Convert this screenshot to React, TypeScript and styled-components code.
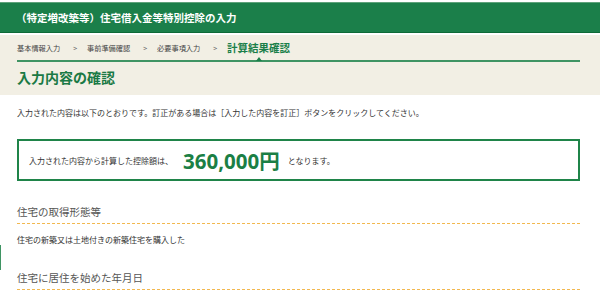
import React from "react";
import styled, { createGlobalStyle } from "styled-components";

const GlobalStyle = createGlobalStyle`
  html, body {
    margin: 0;
    padding: 0;
    background: #ffffff;
  }
  body {
    font-family: "Noto Sans CJK JP", "Noto Sans", sans-serif;
    color: #333333;
    width: 600px;
    overflow: hidden;
  }
`;

const Page = styled.div`
  position: relative;
  padding-top: 2px;
  width: 600px;
  height: 301px;
  overflow: hidden;
`;

const Header = styled.header`
  height: 29px;
  background: #1b7f4a;
  border-top: 1px solid #5ea37b;
  border-bottom: 1px solid #0e6a37;
  display: flex;
  align-items: center;
  padding-left: 16px;
  margin-bottom: 2px;
`;

const HeaderTitle = styled.h1`
  margin: 0;
  font-size: 10.5px;
  font-weight: 700;
  color: #ffffff;
  letter-spacing: 0;
`;

const Band = styled.section`
  background: #f2efe4;
  padding: 6px 20px 8px 17px;
`;

const Crumbs = styled.nav`
  display: flex;
  align-items: center;
  height: 14px;
  padding-bottom: 5px;
  border-bottom: 2px solid #3f9463;
  position: relative;
`;

const Crumb = styled.span<{ $active?: boolean }>`
  position: relative;
  font-size: ${(p) => (p.$active ? "10.5px" : "7.2px")};
  font-weight: ${(p) => (p.$active ? 700 : 400)};
  color: ${(p) => (p.$active ? "#1b7f4a" : "#444444")};
  line-height: 14px;
  white-space: nowrap;
`;

const Pointer = styled.span`
  position: absolute;
  left: 50%;
  bottom: -6px;
  transform: translateX(-50%);
  width: 0;
  height: 0;
  border-left: 3px solid transparent;
  border-right: 3px solid transparent;
  border-bottom: 4px solid #1b7f4a;
`;

const Sep = styled.span`
  font-size: 7px;
  color: #666666;
  margin: 0 10px 0 13px;
  line-height: 14px;
`;

const PageTitle = styled.h2`
  margin: 5px 0 0;
  font-size: 14px;
  line-height: 20px;
  font-weight: 700;
  color: #1b7a45;
`;

const Main = styled.main`
  padding: 12px 20px 0 17px;
`;

const Lead = styled.p`
  margin: 0;
  font-size: 8px;
  line-height: 12px;
  color: #333333;
  white-space: nowrap;
`;

const ResultBox = styled.div`
  margin-top: 20px;
  height: 38px;
  border: 2px solid #1f8449;
  display: flex;
  align-items: center;
  padding-left: 10px;
`;

const BoxText = styled.span`
  font-size: 8px;
  color: #333333;
  white-space: nowrap;
`;

const Amount = styled.span`
  font-family: "Noto Sans", "Noto Sans CJK JP", sans-serif;
  font-size: 20.5px;
  font-weight: 700;
  color: #1b7f45;
  margin: 0 8px 0 10px;
  line-height: 24px;
`;

const Yen = styled.span`
  font-family: "Noto Sans CJK JP", sans-serif;
`;

const SectionHeading = styled.h3<{ $first?: boolean }>`
  margin: ${(p) => (p.$first ? "23px" : "24px")} 0 0;
  font-size: 10.5px;
  line-height: 16px;
  font-weight: 400;
  color: #555555;
  padding-bottom: 3px;
  border-bottom: 1px dashed #f2b84f;
`;

const SectionBody = styled.p`
  margin: 10px 0 0;
  font-size: 8px;
  line-height: 12px;
  color: #333333;
`;

const SideTab = styled.div`
  position: absolute;
  left: 0;
  top: 245px;
  width: 1px;
  height: 25px;
  background: #3f9463;
`;

export default function App() {
  return (
    <>
      <GlobalStyle />
      <Page>
        <Header>
          <HeaderTitle>（特定増改築等）住宅借入金等特別控除の入力</HeaderTitle>
        </Header>
        <Band>
          <Crumbs>
            <Crumb>基本情報入力</Crumb>
            <Sep>&gt;</Sep>
            <Crumb>事前準備確認</Crumb>
            <Sep>&gt;</Sep>
            <Crumb>必要事項入力</Crumb>
            <Sep>&gt;</Sep>
            <Crumb $active>
              計算結果確認
              <Pointer />
            </Crumb>
          </Crumbs>
          <PageTitle>入力内容の確認</PageTitle>
        </Band>
        <Main>
          <Lead>
            入力された内容は以下のとおりです。訂正がある場合は［入力した内容を訂正］ボタンをクリックしてください。
          </Lead>
          <ResultBox>
            <BoxText>入力された内容から計算した控除額は、</BoxText>
            <Amount>
              360,000<Yen>円</Yen>
            </Amount>
            <BoxText>となります。</BoxText>
          </ResultBox>
          <SectionHeading $first>住宅の取得形態等</SectionHeading>
          <SectionBody>住宅の新築又は土地付きの新築住宅を購入した</SectionBody>
          <SectionHeading>住宅に居住を始めた年月日</SectionHeading>
        </Main>
        <SideTab />
      </Page>
    </>
  );
}
